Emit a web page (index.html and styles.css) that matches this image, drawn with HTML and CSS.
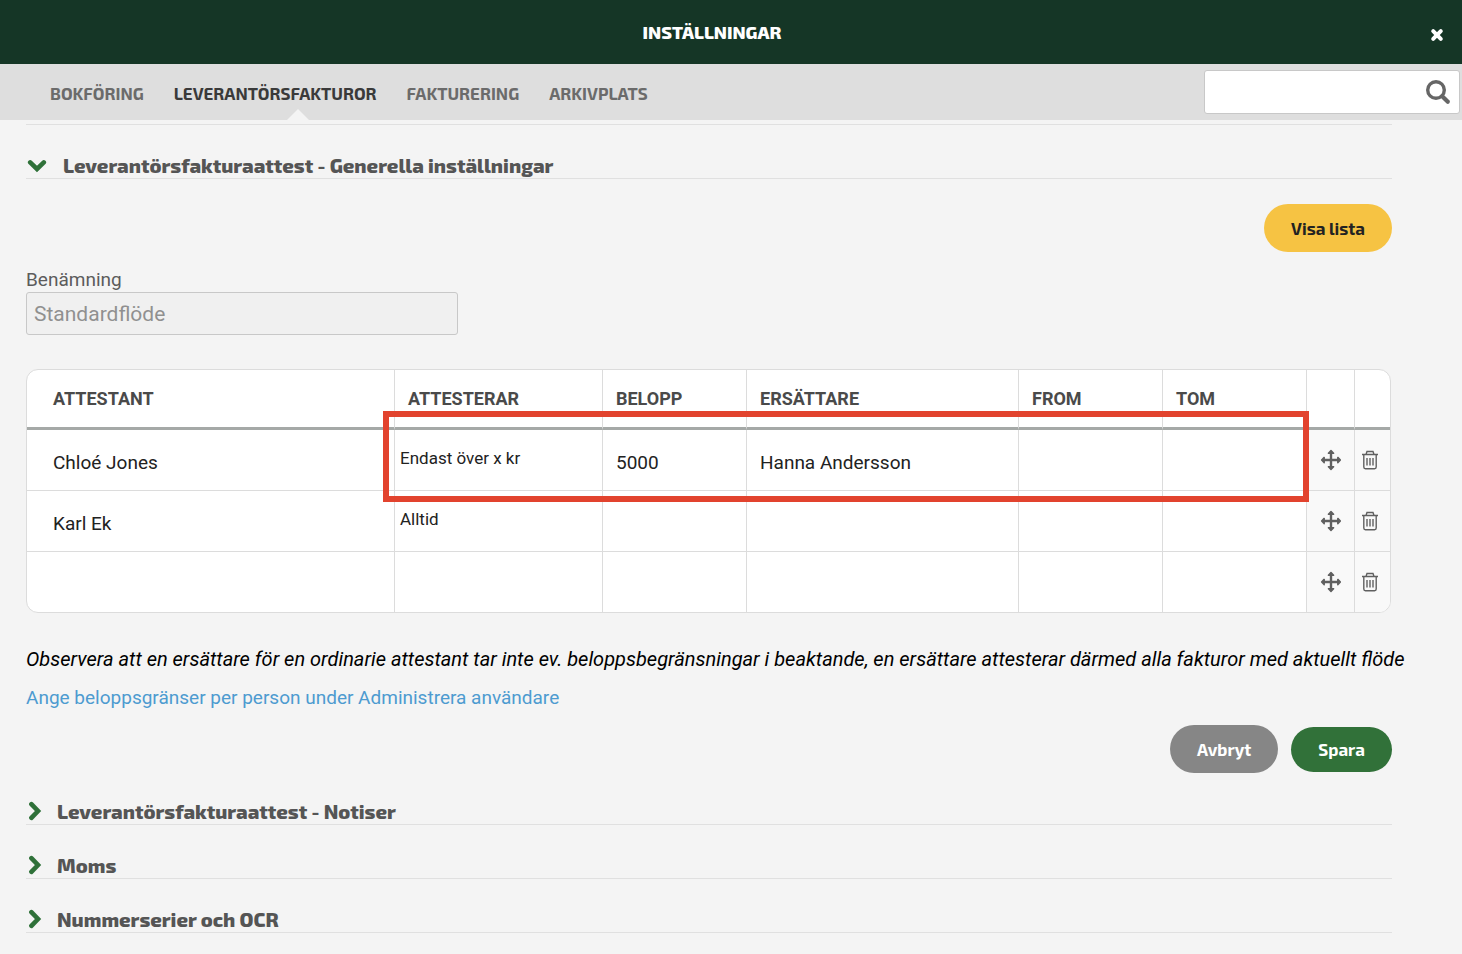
FILE: index.html
```html
<!DOCTYPE html>
<html lang="sv">
<head>
  <meta charset="UTF-8">
  <meta name="viewport" content="width=device-width, initial-scale=1.0">
  <title>Inställningar</title>
  <link rel="stylesheet" href="styles.css">
</head>
<body>
  <!-- Shared icons -->
  <svg class="sprite" aria-hidden="true">
    <symbol id="icon-chevron" viewBox="0 0 14 20">
      <path d="M3.4 3.2l6.6 6.8-6.6 6.8" fill="none" stroke="currentColor" stroke-width="4.6" stroke-linecap="round" stroke-linejoin="miter"/>
    </symbol>
    <symbol id="icon-move" viewBox="0 0 22 22">
      <path d="M11 3v16M3 11h16" fill="none" stroke="currentColor" stroke-width="2.4"/>
      <path d="M8.4 4.2L11 1.6l2.6 2.6zM8.4 17.8l2.6 2.6 2.6-2.6zM4.2 8.4L1.6 11l2.6 2.6zM17.8 8.4l2.6 2.6-2.6 2.6z" fill="currentColor" stroke="currentColor" stroke-width="1.5" stroke-linecap="round" stroke-linejoin="round"/>
    </symbol>
    <symbol id="icon-trash" viewBox="0 0 18 20">
      <path d="M1 4.5h16M5 4.5l1-3h6l1 3M2.8 4.5v12.6q0 1.6 1.6 1.6h9.2q1.6 0 1.6-1.6V4.5M6 8v7.5M9 8v7.5M12 8v7.5" fill="none" stroke="currentColor" stroke-width="1.4"/>
    </symbol>
  </svg>

  <header class="topbar">
    <h1>INSTÄLLNINGAR</h1>
    <button class="close-btn" type="button" aria-label="Stäng">
      <svg width="14" height="14" viewBox="0 0 14 14"><path d="M3.2 3.2l7.6 7.6M10.8 3.2l-7.6 7.6" stroke="currentColor" stroke-width="4" stroke-linecap="round"/></svg>
    </button>
  </header>

  <nav class="tabs">
    <ul>
      <li><a href="#bokforing">BOKFÖRING</a></li>
      <li><a href="#leverantorsfakturor" class="active" aria-current="page">LEVERANTÖRSFAKTUROR</a></li>
      <li><a href="#fakturering">FAKTURERING</a></li>
      <li><a href="#arkivplats">ARKIVPLATS</a></li>
    </ul>
    <form class="search">
      <input type="text" aria-label="Sök">
      <button type="button" aria-label="Sök">
        <svg width="26" height="26" viewBox="0 0 26 26" fill="none" stroke="currentColor"><circle cx="11" cy="11" r="8.3" stroke-width="3.4"/><path d="M17.2 17.2l5.6 5.6" stroke-width="4.2" stroke-linecap="round"/></svg>
      </button>
    </form>
  </nav>

  <main>
    <section>
      <h2 class="section-title open">
        <button type="button" aria-expanded="true">
          <svg class="chevron"><use href="#icon-chevron"/></svg>
          <span>Leverantörsfakturaattest - Generella inställningar</span>
        </button>
      </h2>

      <div class="actions actions-top">
        <button class="btn btn-yellow" type="button">Visa lista</button>
      </div>

      <div class="field">
        <label for="benamning">Benämning</label>
        <input id="benamning" type="text" value="Standardflöde" disabled>
      </div>

      <div class="table-wrap">
        <table>
          <colgroup>
            <col>
            <col class="col-type">
            <col class="col-small">
            <col class="col-name">
            <col class="col-small">
            <col class="col-small">
            <col class="col-move">
            <col class="col-delete">
          </colgroup>
          <thead>
            <tr>
              <th>ATTESTANT</th>
              <th>ATTESTERAR</th>
              <th>BELOPP</th>
              <th>ERSÄTTARE</th>
              <th>FROM</th>
              <th>TOM</th>
              <th></th>
              <th></th>
            </tr>
          </thead>
          <tbody>
            <tr>
              <td>Chloé Jones</td>
              <td class="type">Endast över x kr</td>
              <td>5000</td>
              <td>Hanna Andersson</td>
              <td></td>
              <td></td>
              <td class="tool"><button type="button" aria-label="Flytta"><svg class="move"><use href="#icon-move"/></svg></button></td>
              <td class="tool"><button type="button" aria-label="Ta bort"><svg class="trash"><use href="#icon-trash"/></svg></button></td>
            </tr>
            <tr>
              <td>Karl Ek</td>
              <td class="type">Alltid</td>
              <td></td>
              <td></td>
              <td></td>
              <td></td>
              <td class="tool"><button type="button" aria-label="Flytta"><svg class="move"><use href="#icon-move"/></svg></button></td>
              <td class="tool"><button type="button" aria-label="Ta bort"><svg class="trash"><use href="#icon-trash"/></svg></button></td>
            </tr>
            <tr>
              <td></td>
              <td class="type"></td>
              <td></td>
              <td></td>
              <td></td>
              <td></td>
              <td class="tool"><button type="button" aria-label="Flytta"><svg class="move"><use href="#icon-move"/></svg></button></td>
              <td class="tool"><button type="button" aria-label="Ta bort"><svg class="trash"><use href="#icon-trash"/></svg></button></td>
            </tr>
          </tbody>
        </table>
        <div class="highlight"></div>
      </div>

      <p class="note">Observera att en ersättare för en ordinarie attestant tar inte ev. beloppsbegränsningar i beaktande, en ersättare attesterar därmed alla fakturor med aktuellt flöde</p>
      <p><a class="link" href="#anvandare">Ange beloppsgränser per person under Administrera användare</a></p>

      <div class="actions">
        <button class="btn btn-grey" type="button">Avbryt</button>
        <button class="btn btn-green" type="button">Spara</button>
      </div>
    </section>

    <!-- Collapsed sections -->
    <h2 class="section-title">
      <button type="button" aria-expanded="false">
        <svg class="chevron"><use href="#icon-chevron"/></svg>
        <span>Leverantörsfakturaattest - Notiser</span>
      </button>
    </h2>
    <h2 class="section-title">
      <button type="button" aria-expanded="false">
        <svg class="chevron"><use href="#icon-chevron"/></svg>
        <span>Moms</span>
      </button>
    </h2>
    <h2 class="section-title">
      <button type="button" aria-expanded="false">
        <svg class="chevron"><use href="#icon-chevron"/></svg>
        <span>Nummerserier och OCR</span>
      </button>
    </h2>
  </main>
</body>
</html>
```
FILE: styles.css
```css
* {
  margin: 0;
  padding: 0;
  box-sizing: border-box;
}
body {
  font-family: Roboto, sans-serif;
  font-size: 19px;
  background: #f4f4f4;
  color: #222;
}
button {
  background: none;
  border: none;
  color: inherit;
  font: inherit;
  cursor: pointer;
}
svg {
  display: block;
}
.sprite {
  display: none;
}

/* Top bar */
.topbar {
  display: flex;
  align-items: center;
  height: 64px;
  padding-right: 18px;
  background: #153626;
  color: #fff;
}
.topbar h1 {
  flex: 1;
  font-family: "Exo 2", "Noto Sans", sans-serif;
  font-size: 18px;
  font-weight: 800;
  text-align: center;
}
.close-btn {
  padding: 6px 0 0 6px;
}

/* Tabs */
.tabs {
  display: flex;
  justify-content: space-between;
  align-items: center;
  height: 56px;
  padding: 0 2px 0 50px;
  background: #dedede;
}
.tabs ul {
  display: flex;
  gap: 30px;
  list-style: none;
}
.tabs a {
  display: block;
  position: relative;
  font-family: "Exo 2", "Noto Sans", sans-serif;
  font-size: 17px;
  font-weight: 700;
  line-height: 58px;
  height: 56px;
  color: #6b6b6b;
  text-decoration: none;
}
.tabs a.active {
  color: #3a3a3a;
}
.tabs a.active::after {
  content: "";
  position: absolute;
  bottom: 0;
  left: 50%;
  margin-left: 12px;
  border: 11px solid transparent;
  border-top: none;
  border-bottom-color: #f4f4f4;
}
.search {
  display: flex;
  align-items: center;
  width: 256px;
  height: 44px;
  background: #fff;
  border: 1px solid #c8c8c8;
  border-radius: 3px;
}
.search input {
  flex: 1;
  min-width: 0;
  height: 100%;
  padding: 0 8px;
  border: none;
  background: none;
  font: inherit;
}
.search button {
  padding: 0 8px 0 4px;
  color: #666;
}

main {
  padding: 4px 70px 20px 26px;
}
section {
  border-top: 1px solid #e0e0e0;
}

/* Section headings */
.section-title {
  display: flex;
  align-items: flex-end;
  height: 54px;
  border-bottom: 1px solid #e0e0e0;
  font-family: "Exo 2", "Noto Sans", sans-serif;
  font-size: 20px;
  font-weight: 800;
  color: #555;
}
section + .section-title {
  height: 52px;
}
.section-title button {
  display: flex;
  align-items: center;
  gap: 15px;
  padding-left: 2px;
  line-height: 26px;
}
.chevron {
  width: 14px;
  height: 20px;
  color: #2f7139;
}
.open button {
  gap: 19px;
}
.open .chevron {
  margin: 2px 0 0 2px;
  transform: rotate(90deg);
}

/* Buttons */
.actions {
  display: flex;
  justify-content: flex-end;
  align-items: center;
  gap: 13px;
  margin-top: 15px;
}
.actions-top {
  margin-top: 25px;
}
.btn {
  height: 48px;
  padding: 0 27px;
  border-radius: 24px;
  font-family: "Exo 2", "Noto Sans", sans-serif;
  font-size: 17px;
  font-weight: 700;
}
.btn-yellow {
  background: #f6c343;
  color: #222;
}
.btn-grey {
  background: #868686;
  color: #fff;
}
.btn-green {
  height: 45px;
  background: #317139;
  color: #fff;
}

/* Form field */
.field {
  width: 432px;
  margin-top: 16px;
}
.field label {
  display: block;
  line-height: 24px;
  color: #5c5c5c;
}
.field input {
  display: block;
  width: 100%;
  height: 43px;
  padding: 0 7px;
  border: 1px solid #c8c8c8;
  border-radius: 3px;
  background: #f0f0f0;
  color: #909090;
  font-family: inherit;
  font-size: 21px;
}

/* Approver table */
.table-wrap {
  position: relative;
  margin: 34px 1px 34px 0;
}
table {
  width: 100%;
  table-layout: fixed;
  border-collapse: separate;
  border-spacing: 0;
  border: 1px solid #dcdcdc;
  border-radius: 12px;
  background: #fff;
  overflow: hidden;
}
.col-type {
  width: 208px;
}
.col-small {
  width: 144px;
}
.col-name {
  width: 272px;
}
.col-move {
  width: 48px;
}
.col-delete {
  width: 36px;
}
th, td {
  height: 61px;
  padding: 4px 0 0 13px;
  border-left: 1px solid #dcdcdc;
  text-align: left;
}
th {
  height: 60px;
  padding-top: 0;
  border-bottom: 3px solid #a5a9a7;
  font-size: 18px;
  font-weight: 700;
  color: #4a4a4a;
}
th:first-child, td:first-child {
  padding-left: 26px;
  border-left: none;
}
tbody tr:not(:last-child) td {
  border-bottom: 1px solid #dcdcdc;
}
tbody tr:last-child td {
  height: 60px;
}
td.type {
  padding: 0 0 4px 5px;
  font-size: 17px;
}
td.tool {
  padding: 0;
  background: #f9f9f9;
  color: #606060;
}
.tool svg {
  margin: 0 auto;
}
.tool button {
  display: block;
  width: 100%;
}
.move {
  width: 22px;
  height: 22px;
}
.trash {
  width: 18px;
  height: 20px;
}
.tool:last-child svg {
  margin-left: 6px;
}

/* Marks the first row's approval settings */
.highlight {
  position: absolute;
  top: 42px;
  right: 82px;
  width: 926px;
  height: 91px;
  border: 6px solid #e2432e;
  pointer-events: none;
}

.note {
  margin: 0 -20px 15px 0;
  font-size: 20px;
  line-height: 24px;
  font-style: italic;
  color: #000;
}
.link {
  line-height: 24px;
  color: #4d9bd0;
  text-decoration: none;
}
```
